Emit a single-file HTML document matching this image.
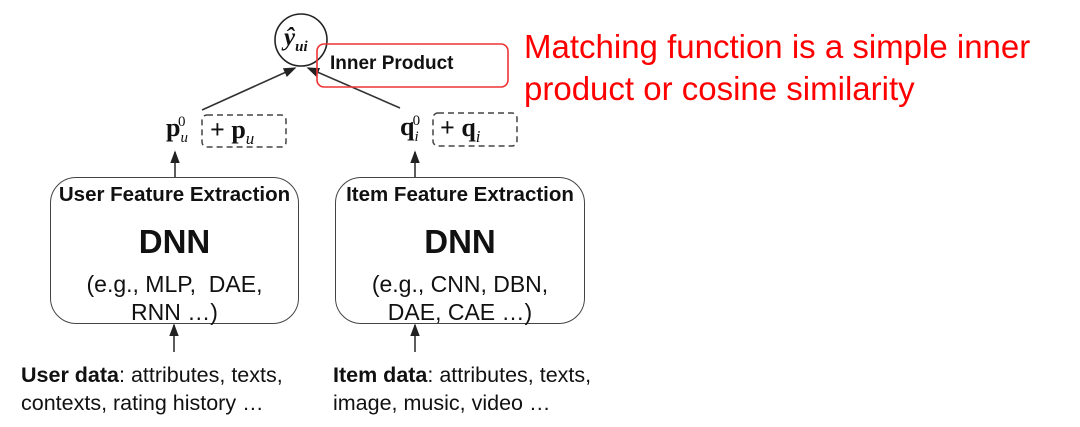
<!DOCTYPE html>
<html><head><meta charset="utf-8"><style>
body{margin:0;width:1080px;height:427px;background:#fff;position:relative;overflow:hidden;font-family:"Liberation Sans",sans-serif;color:#111}
.a{position:absolute;white-space:nowrap}
.box{position:absolute;border:1.6px solid #444;border-radius:26px;box-sizing:border-box}
.t{font-weight:bold;font-size:20.5px;text-align:center;width:100%;position:absolute;left:0}
.d{font-weight:bold;font-size:33px;text-align:center;width:100%;position:absolute;left:0}
.e{font-size:23px;text-align:center;width:100%;position:absolute;left:0;line-height:28px}
.red{color:#f00;font-size:33px;line-height:44px}
.m{font-family:"Liberation Serif",serif;font-weight:bold;font-size:26px}
</style></head><body>
<svg width="1080" height="427" style="position:absolute;left:0;top:0">
<defs><marker id="ar" markerWidth="8" markerHeight="8" refX="7" refY="4" orient="auto"><path d="M0,1 L8,4 L0,7z" fill="#222"/></marker></defs>
<circle cx="301" cy="40" r="26" fill="none" stroke="#222" stroke-width="1.6"/>
<line x1="202" y1="110" x2="295" y2="68" stroke="#333" stroke-width="1.6" marker-end="url(#ar)"/>
<line x1="400" y1="108" x2="308" y2="68" stroke="#333" stroke-width="1.6" marker-end="url(#ar)"/>
<rect x="317" y="44" width="191" height="43" rx="7" fill="none" stroke="#e33" stroke-width="1.6"/>
<rect x="202" y="115" width="84" height="32" rx="5" fill="none" stroke="#444" stroke-width="1.5" stroke-dasharray="6,4"/>
<rect x="433" y="113" width="84" height="33" rx="5" fill="none" stroke="#444" stroke-width="1.5" stroke-dasharray="6,4"/>
<line x1="175" y1="177" x2="175" y2="152" stroke="#333" stroke-width="1.6" marker-end="url(#ar)"/>
<line x1="415" y1="177" x2="415" y2="152" stroke="#333" stroke-width="1.6" marker-end="url(#ar)"/>
<line x1="174" y1="352" x2="174" y2="325" stroke="#333" stroke-width="1.6" marker-end="url(#ar)"/>
<line x1="415" y1="352" x2="415" y2="325" stroke="#333" stroke-width="1.6" marker-end="url(#ar)"/>
</svg>
<div class="a" style="left:284px;top:24px;font-family:'Liberation Serif',serif;font-style:italic;font-weight:bold;font-size:25px">ŷ<sub style="font-size:15px">ui</sub></div>
<div class="a" style="left:330px;top:53px;font-weight:bold;font-size:19px">Inner Product</div>
<div class="a red" style="left:524px;top:25px">Matching function is a simple inner</div>
<div class="a red" style="left:524px;top:67px">product or cosine similarity</div>
<div class="a m" style="left:166px;top:113px">p<sub style="font-size:15px;font-weight:normal;font-style:italic">u</sub><sup style="font-size:15px;font-weight:normal;position:relative;left:-10px">0</sup></div>
<div class="a m" style="left:210px;top:115px">+ p<sub style="font-size:17px;font-weight:normal;font-style:italic">u</sub></div>
<div class="a m" style="left:400px;top:112px">q<sub style="font-size:15px;font-weight:normal;font-style:italic">i</sub><sup style="font-size:15px;font-weight:normal;position:relative;left:-6px">0</sup></div>
<div class="a m" style="left:440px;top:113px">+ q<sub style="font-size:17px;font-weight:normal;font-style:italic">i</sub></div>
<div class="box" style="left:50px;top:177px;width:249px;height:147px">
<div class="t" style="top:5px">User Feature Extraction</div>
<div class="d" style="top:45px">DNN</div>
<div class="e" style="top:92px">(e.g., MLP,&nbsp; DAE,<br>RNN …)</div></div>
<div class="box" style="left:335px;top:177px;width:250px;height:147px">
<div class="t" style="top:5px">Item Feature Extraction</div>
<div class="d" style="top:45px">DNN</div>
<div class="e" style="top:92px">(e.g., CNN, DBN,<br>DAE, CAE …)</div></div>
<div class="a" style="left:21px;top:361px;font-size:21.5px;line-height:28px"><b>User data</b>: attributes, texts,<br>contexts, rating history …</div>
<div class="a" style="left:333px;top:361px;font-size:21.5px;line-height:28px"><b>Item data</b>: attributes, texts,<br>image, music, video …</div>
</body></html>
